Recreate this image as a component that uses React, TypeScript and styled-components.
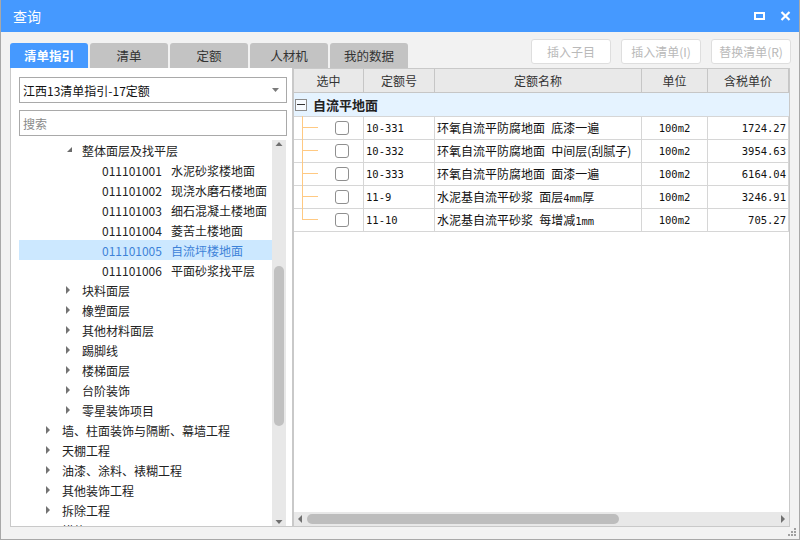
import React from "react";
import styled, { createGlobalStyle } from "styled-components";

const GlobalStyle = createGlobalStyle`
  html, body {
    margin: 0;
    padding: 0;
  }
  body {
    font-family: "Noto Sans CJK SC", "Noto Sans", sans-serif;
    font-size: 12px;
    color: #222;
  }
  * {
    box-sizing: border-box;
  }
`;

const Window = styled.div`
  width: 800px;
  height: 540px;
  display: flex;
  flex-direction: column;
  background: #f2f2f2;
  border: 1px solid #a8a8a8;
  border-top: none;
  overflow: hidden;
`;

const TitleBar = styled.div`
  height: 32px;
  flex: none;
  display: flex;
  align-items: center;
  padding: 0 8px 0 12px;
  background: #4599ff;
  color: #fff;
`;

const Title = styled.div`
  font-size: 14px;
  flex: 1;
`;

const TitleButtons = styled.div`
  display: flex;
  align-items: center;
  gap: 15px;
`;

const TopBar = styled.div`
  height: 36px;
  flex: none;
  display: flex;
  align-items: flex-end;
  padding: 0 8px 0 9px;
`;

const Tabs = styled.div`
  display: flex;
  gap: 2px;
`;

const Tab = styled.div<{ $active?: boolean }>`
  width: 78px;
  height: 25px;
  line-height: 25px;
  text-align: center;
  border-radius: 3px 3px 0 0;
  font-size: 12.5px;
  background: ${({ $active }) => ($active ? "#4599ff" : "#c3c3c3")};
  color: ${({ $active }) => ($active ? "#fff" : "#333")};
  font-weight: ${({ $active }) => ($active ? 700 : 400)};
`;

const Actions = styled.div`
  margin-left: auto;
  margin-bottom: 4px;
  display: flex;
  gap: 10px;
`;

const ActionButton = styled.div`
  width: 80px;
  height: 25px;
  line-height: 23px;
  text-align: center;
  background: #fff;
  border: 1px solid #dedede;
  border-radius: 3px;
  color: #b9b9b9;
  font-size: 12px;
`;

const Content = styled.div`
  height: 459px;
  flex: none;
  display: flex;
  padding: 0 8px 0 9px;
`;

const LeftPanel = styled.div`
  width: 283px;
  flex: none;
  display: flex;
  flex-direction: column;
  background: #fff;
  border: 1px solid #c9c9c9;
  border-top: none;
  padding: 9px 5px 0 8px;
`;

const Select = styled.div`
  height: 26px;
  flex: none;
  display: flex;
  align-items: center;
  padding: 0 7px 0 3px;
  border: 1px solid #a9a9a9;
  color: #111;
`;

const SelectText = styled.span`
  flex: 1;
`;

const Search = styled.div`
  height: 26px;
  flex: none;
  margin-top: 7px;
  display: flex;
  align-items: center;
  padding: 0 3px;
  border: 1px solid #a9a9a9;
  color: #8a8a8a;
`;

const TreeArea = styled.div`
  flex: 1;
  min-height: 0;
  margin-top: 4px;
  margin-right: 1px;
  display: flex;
  overflow: hidden;
`;

const TreeList = styled.div`
  flex: 1;
  overflow: hidden;
`;

const TreeRow = styled.div<{ $indent: number; $selected?: boolean }>`
  height: 20px;
  display: flex;
  align-items: center;
  white-space: nowrap;
  padding-left: ${({ $indent }) => $indent}px;
  background: ${({ $selected }) => ($selected ? "#cce8ff" : "transparent")};
  color: ${({ $selected }) => ($selected ? "#3d82d8" : "#222")};
`;

const TreeToggle = styled.svg`
  width: 20px;
  height: 20px;
  flex: none;
`;

const Code = styled.span`
  margin-right: 9px;
`;

const VScroll = styled.div`
  width: 14px;
  flex: none;
  display: flex;
  flex-direction: column;
  background: #e8e8e8;
`;

const ScrollArrow = styled.svg`
  flex: none;
  display: block;
`;

const VTrack = styled.div`
  flex: 1;
  padding: 114px 2px 0 2px;
`;

const VThumb = styled.div`
  height: 160px;
  border-radius: 5px;
  background: #c1c1c1;
`;

const Grid = styled.div`
  width: 497px;
  flex: none;
  display: flex;
  flex-direction: column;
  background: #fff;
  border: 1px solid #c9c9c9;
`;

const columns = "70px 71px 207px 66px 81px";

const HeaderRow = styled.div`
  display: grid;
  grid-template-columns: ${columns};
  height: 24px;
  flex: none;
  background: #e9e9e9;
  border-bottom: 1px solid #c6c6c6;
`;

const HeaderCell = styled.div`
  line-height: 23px;
  text-align: center;
  border-right: 1px solid #c6c6c6;
  color: #333;
`;

const GroupRow = styled.div`
  height: 24px;
  flex: none;
  display: flex;
  align-items: center;
  gap: 6px;
  padding-left: 1px;
  background: #e5f3ff;
  border-bottom: 1px solid #d6d6d6;
  font-size: 13px;
  font-weight: 700;
  color: #222;
`;

const Collapse = styled.div`
  width: 12px;
  height: 12px;
  display: flex;
  align-items: center;
  justify-content: center;
  border: 1px solid #8c8c8c;
  background: #f7fbff;

  &::after {
    content: "";
    width: 8px;
    height: 1px;
    background: #333;
  }
`;

const DataRow = styled.div`
  display: grid;
  grid-template-columns: ${columns};
  height: 23px;
  flex: none;
  border-bottom: 1px solid #d6d6d6;
`;

const DataCell = styled.div<{ $align?: "left" | "center" | "right"; $mono?: boolean }>`
  line-height: 22px;
  padding: 0 2px 0 2px;
  white-space: nowrap;
  overflow: hidden;
  border-right: 1px solid #d6d6d6;
  text-align: ${({ $align }) => $align || "left"};
  word-spacing: 3.5px;
  font-family: ${({ $mono }) =>
    $mono ? '"DejaVu Sans Mono", monospace' : '"Noto Sans CJK SC", sans-serif'};
  font-size: ${({ $mono }) => ($mono ? "10.5px" : "12px")};
  color: #111;
`;

const Num = styled.span`
  font-family: "DejaVu Sans Mono", monospace;
  font-size: 10.5px;
`;

const CheckCell = styled.div<{ $last?: boolean }>`
  position: relative;
  display: flex;
  align-items: center;
  padding-left: 41px;
  border-right: 1px solid #d6d6d6;

  &::before {
    content: "";
    position: absolute;
    left: 8px;
    top: -1px;
    width: 1px;
    height: ${({ $last }) => ($last ? "12px" : "24px")};
    background: #ffc982;
  }

  &::after {
    content: "";
    position: absolute;
    left: 8px;
    top: 10px;
    width: 16px;
    height: 1px;
    background: #ffc982;
  }
`;

const Checkbox = styled.div`
  width: 14px;
  height: 14px;
  border: 1px solid #8f8f8f;
  border-radius: 3px;
  background: #fff;
`;

const GridFill = styled.div`
  flex: 1;
`;

const HScroll = styled.div`
  height: 14px;
  flex: none;
  display: flex;
  align-items: center;
  background: #e8e8e8;
`;

const HTrack = styled.div`
  flex: 1;
  padding-left: 1px;
`;

const HThumb = styled.div`
  width: 312px;
  height: 10px;
  border-radius: 5px;
  background: #bdbdbd;
`;

const Footer = styled.div`
  flex: 1;
  display: flex;
  justify-content: flex-end;
  align-items: flex-end;
  padding: 0 2px 2px 0;
`;

type TreeItem = {
  level: number;
  text: string;
  code?: string;
  toggle?: "open" | "closed";
  selected?: boolean;
};

const tree: TreeItem[] = [
  { level: 3, text: "整体面层及找平层", toggle: "open" },
  { level: 4, code: "011101001", text: "水泥砂浆楼地面" },
  { level: 4, code: "011101002", text: "现浇水磨石楼地面" },
  { level: 4, code: "011101003", text: "细石混凝土楼地面" },
  { level: 4, code: "011101004", text: "菱苦土楼地面" },
  { level: 4, code: "011101005", text: "自流坪楼地面", selected: true },
  { level: 4, code: "011101006", text: "平面砂浆找平层" },
  { level: 3, text: "块料面层", toggle: "closed" },
  { level: 3, text: "橡塑面层", toggle: "closed" },
  { level: 3, text: "其他材料面层", toggle: "closed" },
  { level: 3, text: "踢脚线", toggle: "closed" },
  { level: 3, text: "楼梯面层", toggle: "closed" },
  { level: 3, text: "台阶装饰", toggle: "closed" },
  { level: 3, text: "零星装饰项目", toggle: "closed" },
  { level: 2, text: "墙、柱面装饰与隔断、幕墙工程", toggle: "closed" },
  { level: 2, text: "天棚工程", toggle: "closed" },
  { level: 2, text: "油漆、涂料、裱糊工程", toggle: "closed" },
  { level: 2, text: "其他装饰工程", toggle: "closed" },
  { level: 2, text: "拆除工程", toggle: "closed" },
  { level: 2, text: "措施项目", toggle: "closed" },
];

type Quota = {
  code: string;
  name: React.ReactNode;
  unit: string;
  price: string;
};

const quotas: Quota[] = [
  { code: "10-331", name: "环氧自流平防腐地面 底漆一遍", unit: "100m2", price: "1724.27" },
  { code: "10-332", name: "环氧自流平防腐地面 中间层(刮腻子)", unit: "100m2", price: "3954.63" },
  { code: "10-333", name: "环氧自流平防腐地面 面漆一遍", unit: "100m2", price: "6164.04" },
  {
    code: "11-9",
    name: (
      <>
        水泥基自流平砂浆 面层<Num>4mm</Num>厚
      </>
    ),
    unit: "100m2",
    price: "3246.91",
  },
  {
    code: "11-10",
    name: (
      <>
        水泥基自流平砂浆 每增减<Num>1mm</Num>
      </>
    ),
    unit: "100m2",
    price: "705.27",
  },
];

const Toggle = ({ kind }: { kind?: "open" | "closed" }) => (
  <TreeToggle viewBox="0 0 20 20">
    {kind === "closed" && <polygon points="4,6 8,10 4,14" fill="#737373" />}
    {kind === "open" && <polygon points="10,7 10,12 5,12" fill="#6b6b6b" />}
  </TreeToggle>
);

const App = () => (
  <>
    <GlobalStyle />
    <Window>
      <TitleBar>
        <Title>查询</Title>
        <TitleButtons>
          <svg width="11" height="8" viewBox="0 0 11 8">
            <rect x="1" y="1" width="9" height="6" fill="none" stroke="#fff" strokeWidth="2" />
          </svg>
          <svg width="11" height="10" viewBox="0 0 11 10">
            <path d="M1.5 1 L9.5 9 M9.5 1 L1.5 9" stroke="#fff" strokeWidth="2.2" />
          </svg>
        </TitleButtons>
      </TitleBar>

      <TopBar>
        <Tabs>
          <Tab $active>清单指引</Tab>
          <Tab>清单</Tab>
          <Tab>定额</Tab>
          <Tab>人材机</Tab>
          <Tab>我的数据</Tab>
        </Tabs>
        <Actions>
          <ActionButton>插入子目</ActionButton>
          <ActionButton>插入清单(I)</ActionButton>
          <ActionButton>替换清单(R)</ActionButton>
        </Actions>
      </TopBar>

      <Content>
        <LeftPanel>
          <Select>
            <SelectText>江西13清单指引-17定额</SelectText>
            <svg width="7" height="4" viewBox="0 0 7 4">
              <polygon points="0,0 7,0 3.5,4" fill="#7a7a7a" />
            </svg>
          </Select>
          <Search>搜索</Search>
          <TreeArea>
            <TreeList>
              {tree.map((item, i) => (
                <TreeRow key={i} $indent={23 + (item.level - 2) * 20} $selected={item.selected}>
                  <Toggle kind={item.toggle} />
                  {item.code && <Code>{item.code}</Code>}
                  {item.text}
                </TreeRow>
              ))}
            </TreeList>
            <VScroll>
              <ScrollArrow width="14" height="12" viewBox="0 0 14 12">
                <polygon points="3.5,6 10.5,6 7,2" fill="#707070" />
              </ScrollArrow>
              <VTrack>
                <VThumb />
              </VTrack>
              <ScrollArrow width="14" height="12" viewBox="0 0 14 12">
                <polygon points="3.5,6 10.5,6 7,10" fill="#707070" />
              </ScrollArrow>
            </VScroll>
          </TreeArea>
        </LeftPanel>

        <Grid>
          <HeaderRow>
            <HeaderCell>选中</HeaderCell>
            <HeaderCell>定额号</HeaderCell>
            <HeaderCell>定额名称</HeaderCell>
            <HeaderCell>单位</HeaderCell>
            <HeaderCell>含税单价</HeaderCell>
          </HeaderRow>
          <GroupRow>
            <Collapse />
            自流平地面
          </GroupRow>
          {quotas.map((q, i) => (
            <DataRow key={q.code}>
              <CheckCell $last={i === quotas.length - 1}>
                <Checkbox />
              </CheckCell>
              <DataCell $mono>{q.code}</DataCell>
              <DataCell>{q.name}</DataCell>
              <DataCell $mono $align="center">
                {q.unit}
              </DataCell>
              <DataCell $mono $align="right">
                {q.price}
              </DataCell>
            </DataRow>
          ))}
          <GridFill />
          <HScroll>
            <ScrollArrow width="12" height="14" viewBox="0 0 12 14">
              <polygon points="8,3 8,11 4,7" fill="#707070" />
            </ScrollArrow>
            <HTrack>
              <HThumb />
            </HTrack>
            <ScrollArrow width="12" height="14" viewBox="0 0 12 14">
              <polygon points="4,3 4,11 8,7" fill="#707070" />
            </ScrollArrow>
          </HScroll>
        </Grid>
      </Content>

      <Footer>
        <svg width="10" height="10" viewBox="0 0 10 10">
          <g fill="#a0a0a0">
            <rect x="7" y="1" width="2" height="2" />
            <rect x="4" y="4" width="2" height="2" />
            <rect x="7" y="4" width="2" height="2" />
            <rect x="1" y="7" width="2" height="2" />
            <rect x="4" y="7" width="2" height="2" />
            <rect x="7" y="7" width="2" height="2" />
          </g>
        </svg>
      </Footer>
    </Window>
  </>
);

export default App;
